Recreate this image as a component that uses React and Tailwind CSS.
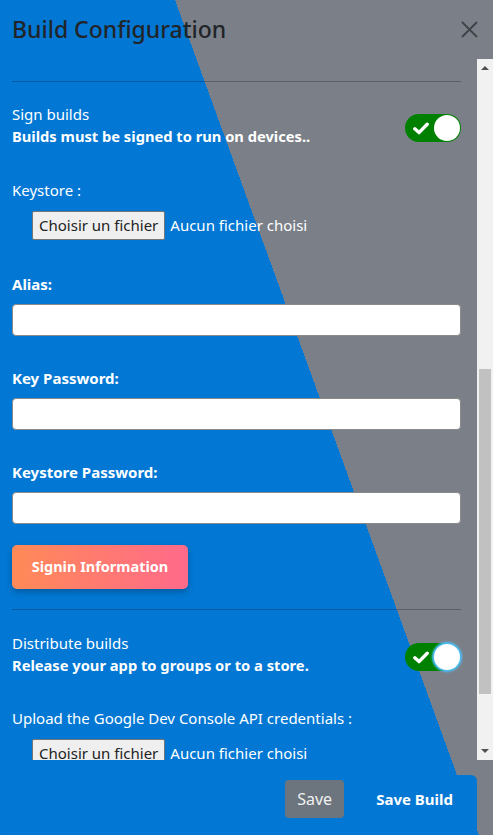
import React from "react";

function Toggle({ glow }) {
  return (
    <div className="relative mt-[11px] flex h-[28px] w-[56px] shrink-0 items-center rounded-full bg-[#008000] pl-[8px]">
      <svg width="16" height="13" viewBox="0 0 16 13" fill="none">
        <path d="M1.8 6.8 L6 10.6 L14.2 2.2" stroke="#fff" strokeWidth="3.4" strokeLinecap="round" strokeLinejoin="round" />
      </svg>
      <div
        className={
          "absolute right-[1px] top-[1px] h-[26px] w-[26px] rounded-full bg-white " +
          (glow ? "shadow-[0_0_2px_2px_#4fc0ff]" : "")
        }
      />
    </div>
  );
}

function FilePicker() {
  return (
    <div className="ml-[20px] mt-[10px] flex items-center">
      <span className="flex h-[29px] items-center rounded-[2px] border border-[#767676] bg-[#efefef] px-[6px] text-[15px] text-[#222]">
        Choisir un fichier
      </span>
      <span className="ml-[5px] text-[15px] text-white">Aucun fichier choisi</span>
    </div>
  );
}

function Field({ label, first }) {
  return (
    <div className={first ? "mt-[33px]" : "mt-[31px]"}>
      <div className="text-[15px] font-bold leading-[22px] text-white">{label}</div>
      <div className="mt-[9px] h-[32px] w-full rounded-[4px] border border-[#8a8a8a] bg-white" />
    </div>
  );
}

export default function App() {
  return (
    <div className="flex h-[835px] w-full flex-col overflow-hidden bg-[linear-gradient(70deg,#0278d4_450px,#7b8088_450px)] font-['Noto_Sans',sans-serif]">
      {/* Header */}
      <div className="flex h-[59px] shrink-0 items-center justify-between pl-[12px] pr-[15px]">
        <h1 className="text-[23px] font-medium text-[#212529]">Build Configuration</h1>
        <svg width="17" height="17" viewBox="0 0 17 17">
          <path d="M1 1 L16 16 M16 1 L1 16" stroke="#3f4347" strokeWidth="1.8" />
        </svg>
      </div>

      {/* Scroll area */}
      <div className="flex h-[701px] shrink-0 overflow-hidden">
        <div className="w-[477px] shrink-0 pl-[12px] pr-[16px] pt-[22px]">
          <div className="border-t border-black/25" />

          <div className="mt-[21px] flex justify-between">
            <div className="leading-[22px] text-white">
              <div className="text-[15px]">Sign builds</div>
              <div className="text-[14.7px] font-bold">Builds must be signed to run on devices..</div>
            </div>
            <Toggle />
          </div>

          <div className="mt-[32px] text-[15px] leading-[22px] text-white">Keystore :</div>
          <FilePicker />

          <Field label="Alias:" first />
          <Field label="Key Password:" />
          <Field label="Keystore Password:" />

          <button className="mt-[21px] h-[44px] w-[176px] rounded-[5px] bg-[linear-gradient(90deg,#ff8a57,#ff6a8a)] text-[14.5px] font-bold text-white shadow-[0_3px_6px_rgba(0,0,0,0.25)]">
            Signin Information
          </button>

          <div className="mt-[20px] border-t border-black/25" />

          <div className="mt-[22px] flex justify-between">
            <div className="leading-[22px] text-white">
              <div className="text-[15px]">Distribute builds</div>
              <div className="text-[14.7px] font-bold">Release your app to groups or to a store.</div>
            </div>
            <Toggle glow />
          </div>

          <div className="mt-[31px] text-[15px] leading-[22px] text-white">
            Upload the Google Dev Console API credentials :
          </div>
          <FilePicker />
        </div>

        {/* Scrollbar */}
        <div className="flex w-[16px] shrink-0 flex-col items-center bg-[#f1f1f1]">
          <div className="mt-[7px] h-0 w-0 border-x-[4px] border-b-[4px] border-x-transparent border-b-[#505050]" />
          <div className="mt-[299px] h-[325px] w-[12px] bg-[#c1c1c1]" />
          <div className="mt-auto mb-[7px] h-0 w-0 border-x-[4px] border-t-[4px] border-x-transparent border-t-[#505050]" />
        </div>
      </div>

      {/* Footer */}
      <div className="mt-[15px] flex h-[60px] w-[477px] shrink-0 items-start justify-end rounded-[6px] bg-[#0278d4] pr-[12px] pt-[5px]">
        <button className="h-[38px] w-[59px] rounded-[4px] bg-[#6c757d] text-[16px] text-[#f1f1f1]">Save</button>
        <button className="ml-[20px] h-[38px] px-[12px] text-[15px] font-bold text-white">Save Build</button>
      </div>
    </div>
  );
}
